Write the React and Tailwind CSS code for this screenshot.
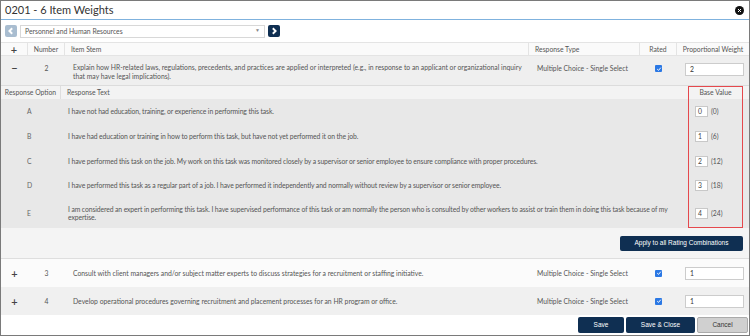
import React from "react";

const ui = { fontFamily: "Lato, 'Noto Sans', sans-serif" };
const btn = { fontFamily: "'Liberation Sans', Arial, sans-serif" };

const options = [
  { key: "A", lines: ["I have not had education, training, or experience in performing this task."], value: 0, score: 0, h: "h-[25px]" },
  { key: "B", lines: ["I have had education or training in how to perform this task, but have not yet performed it on the job."], value: 1, score: 6, h: "h-[25px]" },
  { key: "C", lines: ["I have performed this task on the job. My work on this task was monitored closely by a supervisor or senior employee to ensure compliance with proper procedures."], value: 2, score: 12, h: "h-[24px]" },
  { key: "D", lines: ["I have performed this task as a regular part of a job. I have performed it independently and normally without review by a supervisor or senior employee."], value: 3, score: 18, h: "h-[25px]" },
  {
    key: "E",
    lines: [
      "I am considered an expert in performing this task. I have supervised performance of this task or am normally the person who is consulted by other workers to assist or train them in doing this task because of my",
      "expertise.",
    ],
    value: 4,
    score: 24,
    h: "h-[30px]",
  },
];

function Check() {
  return (
    <span className="inline-flex w-[7px] h-[7px] rounded-[1px] bg-[#2b78e4] items-center justify-center">
      <svg viewBox="0 0 10 10" className="w-[6px] h-[6px]">
        <path d="M2 5.2 L4.2 7.3 L8 2.8" fill="none" stroke="#fff" strokeWidth="1.6" />
      </svg>
    </span>
  );
}

function Chevron({ dir, color }) {
  return (
    <svg viewBox="0 0 10 10" className="w-[8px] h-[8px]">
      <path d={dir === "left" ? "M6.5 1.5 L3 5 L6.5 8.5" : "M3.5 1.5 L7 5 L3.5 8.5"} fill="none" stroke={color} strokeWidth="2.4" />
    </svg>
  );
}

function ItemRow({ num, text, bg }) {
  return (
    <div className={`grid grid-cols-[27px_37px_464px_111px_37px_72px] h-[28px] items-center text-[6.8px] text-[#555] ${bg}`}>
      <div className="text-center text-[11px] leading-none text-[#444] font-semibold">+</div>
      <div className="text-center">{num}</div>
      <div className="pl-[8px]">{text}</div>
      <div className="pl-[8px]">Multiple Choice - Single Select</div>
      <div className="flex justify-center"><Check /></div>
      <div className="pl-[8px]">
        <div className="w-[59px] h-[13px] bg-white border border-[#ccc] pl-[4px] leading-[11px] text-[#333]">1</div>
      </div>
    </div>
  );
}

export default function App() {
  return (
    <div className="w-[750px] h-[336px] border border-[#7a7a7a] bg-white flex flex-col overflow-hidden" style={ui}>
      <div className="h-[19px] flex items-center justify-between px-[4px] border-b border-[#7fb2de] shrink-0">
        <span className="text-[11px] text-[#333]">0201 - 6 Item Weights</span>
        <span className="w-[9px] h-[9px] rounded-full bg-[#111] flex items-center justify-center mr-[1px]">
          <svg viewBox="0 0 10 10" className="w-[5px] h-[5px]">
            <path d="M2 2 L8 8 M8 2 L2 8" stroke="#fff" strokeWidth="2" />
          </svg>
        </span>
      </div>

      <div className="h-[22px] flex items-center gap-[3px] px-[4px] shrink-0">
        <div className="w-[12px] h-[12px] rounded-[2px] bg-[#a9bdd0] flex items-center justify-center">
          <Chevron dir="left" color="#fff" />
        </div>
        <div className="w-[245px] h-[13px] border border-[#d8d8d8] flex items-center justify-between px-[4px] text-[6.8px] text-[#555]">
          <span>Personnel and Human Resources</span>
          <span className="text-[5px] text-[#888]">▼</span>
        </div>
        <div className="w-[12px] h-[12px] rounded-[2px] bg-[#0f2f52] flex items-center justify-center">
          <Chevron dir="right" color="#fff" />
        </div>
      </div>

      <div className="grid grid-cols-[27px_37px_464px_111px_37px_72px] h-[14px] items-center text-[6.8px] text-[#555] bg-[#fafafa] border-y border-[#e4e4e4] shrink-0">
        <div className="text-center text-[11px] leading-none text-[#444] font-semibold border-r border-[#e4e4e4] h-full flex items-center justify-center">+</div>
        <div className="text-center border-r border-[#e4e4e4] h-full flex items-center justify-center">Number</div>
        <div className="pl-[6px] border-r border-[#e4e4e4] h-full flex items-center">Item Stem</div>
        <div className="pl-[6px] border-r border-[#e4e4e4] h-full flex items-center">Response Type</div>
        <div className="text-center border-r border-[#e4e4e4] h-full flex items-center justify-center">Rated</div>
        <div className="text-center h-full flex items-center justify-center">Proportional Weight</div>
      </div>

      <div className="grid grid-cols-[27px_37px_464px_111px_37px_72px] h-[30px] items-start pt-[7px] text-[6.8px] text-[#555] bg-[#efefef] border-b border-[#dcdcdc] shrink-0">
        <div className="text-center text-[11px] leading-[9px] text-[#444] font-semibold">−</div>
        <div className="text-center leading-[9px] pt-[1px]">2</div>
        <div className="pl-[8px] leading-[8.5px] pr-[6px]">
          Explain how HR-related laws, regulations, precedents, and practices are applied or interpreted (e.g., in response to an applicant or organizational inquiry that may have legal implications).
        </div>
        <div className="pl-[8px] leading-[9px] pt-[1px]">Multiple Choice - Single Select</div>
        <div className="flex justify-center pt-[2px]"><Check /></div>
        <div className="pl-[8px]">
          <div className="w-[59px] h-[13px] bg-white border border-[#ccc] pl-[4px] leading-[11px] text-[#333]">2</div>
        </div>
      </div>

      <div className="relative bg-[#e8e8e8] shrink-0">
        <div className="grid grid-cols-[60px_627px_55px] h-[13px] items-center text-[6.8px] text-[#555] bg-[#f3f3f3]">
          <div className="text-center border-r border-[#dedede] h-full flex items-center justify-center">Response Option</div>
          <div className="pl-[6px]">Response Text</div>
          <div className="text-center">Base Value</div>
        </div>
        {options.map((o) => (
          <div key={o.key} className={`grid grid-cols-[60px_627px_55px] ${o.h} items-center text-[6.8px] text-[#555]`}>
            <div className="pl-[26px] text-[#666]">{o.key}</div>
            <div className="pl-[7px] leading-[8.5px] overflow-hidden tracking-[-0.1px]">
              {o.lines.map((l) => (
                <div key={l} className="whitespace-nowrap">{l}</div>
              ))}
            </div>
            <div className="flex items-center pl-[7px] gap-[3px]">
              <div className="w-[13px] h-[11px] bg-white border border-[#c8c8c8] pl-[2px] leading-[9px] text-[#444]">{o.value}</div>
              <span>({o.score})</span>
            </div>
          </div>
        ))}
        <div className="absolute left-[687px] top-0 w-[55px] h-[142px] border border-[#e5484d] pointer-events-none" />
      </div>

      <div className="h-[31px] bg-[#f4f4f4] border-b border-[#dedede] flex items-center justify-end pr-[6px] shrink-0">
        <button className="w-[123px] h-[15px] rounded-[2px] bg-[#0f2f52] text-white text-[6.5px]" style={btn}>
          Apply to all Rating Combinations
        </button>
      </div>

      <ItemRow num="3" bg="bg-[#fbfbfb]" text="Consult with client managers and/or subject matter experts to discuss strategies for a recruitment or staffing initiative." />
      <ItemRow num="4" bg="bg-[#f0f0f0]" text="Develop operational procedures governing recruitment and placement processes for an HR program or office." />

      <div className="flex-1 flex items-center justify-end gap-[2px] pr-[1px]" style={btn}>
        <button className="w-[46px] h-[16px] rounded-[2px] bg-[#0f2f52] text-white text-[6.5px]">Save</button>
        <button className="w-[69px] h-[16px] rounded-[2px] bg-[#0f2f52] text-white text-[6.5px]">Save &amp; Close</button>
        <button className="w-[51px] h-[16px] rounded-[2px] bg-[#d0d0d0] border border-[#aaa] text-[#333] text-[6.5px]">Cancel</button>
      </div>
    </div>
  );
}
